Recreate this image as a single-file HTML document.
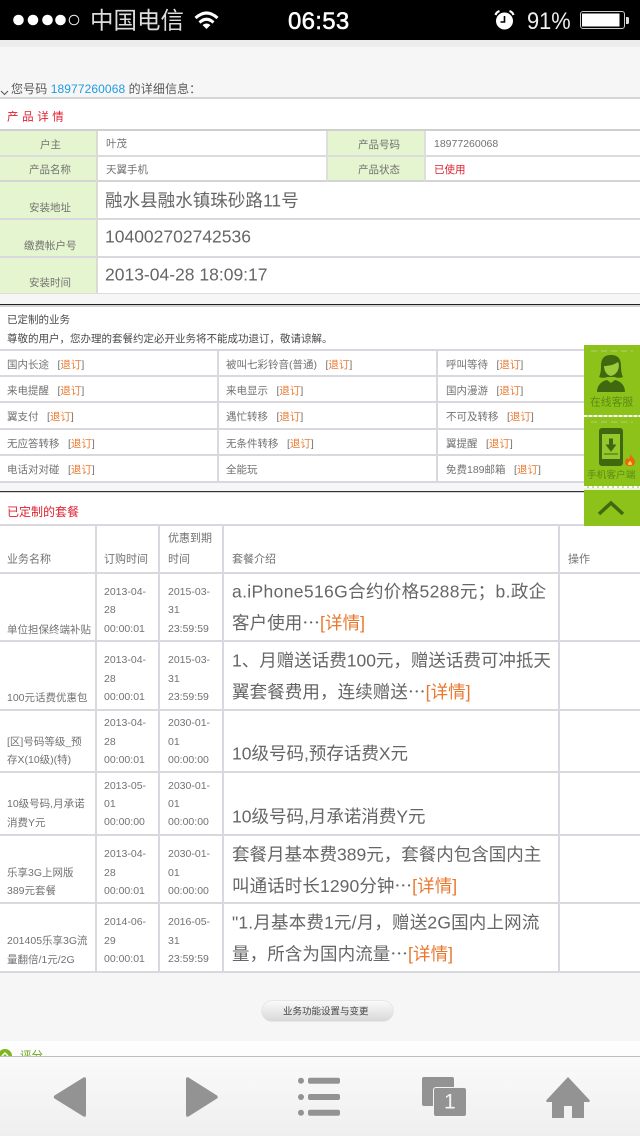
<!DOCTYPE html>
<html lang="zh-Hans"><head><meta charset="utf-8"><title>详细信息</title>
<style>
html,body{margin:0;padding:0;background:#f6f6f6}
#p{position:relative;width:640px;height:1136px;overflow:hidden;background:#f6f6f6;font-family:"Liberation Sans","Noto Sans CJK SC",sans-serif;color:#666}
.r{position:absolute}
.t{position:absolute;white-space:nowrap;line-height:1;transform:translateY(calc(-50% + 2px));font-size:10.5px;color:#727272}
.l{position:absolute;left:0;width:640px;height:2px;background:#d8d8de}
.v{position:absolute;width:2px;background:#d8d8e0}
.g{position:absolute;background:#e5f5cf}
.w{position:absolute;background:#fff}
.o{color:#e9782f}.d{color:#e02030}
.b{font-size:17.5px;color:#666}
.t b{font-weight:normal;margin-left:8.5px}
.e{font-family:"Noto Sans CJK SC",sans-serif}
</style></head><body><div id="p">
<div class="r" style="left:0;top:0;width:640px;height:40px;background:#000"></div>
<div class="r" style="left:0;top:40px;width:640px;height:7px;background:#ececec"></div>
<svg class="r" style="left:0;top:0" width="640" height="40">
<g fill="#fff"><circle cx="18.500" cy="20" r="5.300"/><circle cx="33" cy="20" r="5.300"/><circle cx="47.500" cy="20" r="5.300"/><circle cx="60.500" cy="20" r="5.300"/></g>
<circle cx="74" cy="20" r="4.800" fill="none" stroke="#eee"/>
<g fill="none" stroke="#fff" stroke-width="3"><path d="M195.500 18Q206.500 8 217.500 18"/><path d="M199.500 22.500Q206.500 16 213.500 22.500"/></g><path d="M202.500 25Q206.500 22 210.500 25L206.500 29z" fill="#fff"/>
<circle cx="504.500" cy="21" r="8.500" fill="#fff"/><path d="M504.500 16v6h-4" fill="none" stroke="#000" stroke-width="1.600"/><path d="M495.500 15q1-3 4-4M513.500 15q-1-3-4-4" fill="none" stroke="#fff" stroke-width="2.200"/>
<rect x="580.500" y="11.500" width="44" height="17" rx="2.500" fill="none" stroke="#ccc"/><rect x="582" y="13.500" width="37.500" height="13" fill="#fff"/><path d="M626 17h1.500q1.500 0 1.500 1.500v4q0 1.500-1.500 1.500H626z" fill="#ddd"/>
</svg>
<span class="t" style="left:90px;top:19px;font-size:23.500px;color:#ddd">中国电信</span>
<span class="t" style="left:288px;top:20px;font-size:24px;color:#fff;letter-spacing:.3px;-webkit-text-stroke:.5px #fff">06:53</span>
<span class="t" style="left:527px;top:20px;font-size:24px;color:#eee;transform:translateY(calc(-50% + 2px)) scaleX(.91);transform-origin:left">91%</span>

<svg class="r" style="left:0;top:88px" width="10" height="10"><path d="M1 3l3.500 3.500L8 3" fill="none" stroke="#555"/></svg>
<span class="t" style="left:11px;top:87px;font-size:12px;color:#5a5a5a;letter-spacing:.1px">您号码 <span style="color:#1f9be2">18977260068</span> 的详细信息：</span>
<div class="w" style="left:0;top:97px;width:640px;height:197px"></div>
<div class="l" style="top:97px;background:#d6d6d6"></div>
<span class="t d" style="left:7px;top:116px;font-size:11.500px;letter-spacing:3.600px">产品详情</span>
<div class="l" style="top:129px;background:#cfcfcf"></div>
<div class="g" style="left:0;top:131px;width:96px;height:24px"></div><div class="g" style="left:328px;top:131px;width:96px;height:24px"></div>
<div class="g" style="left:0;top:157px;width:96px;height:24px"></div><div class="g" style="left:328px;top:157px;width:96px;height:24px"></div>
<div class="g" style="left:0;top:182px;width:96px;height:36px"></div><div class="g" style="left:0;top:220px;width:96px;height:36px"></div><div class="g" style="left:0;top:258px;width:96px;height:35px"></div>
<div class="l" style="top:155px;background:#dcdcdc"></div>
<div class="l" style="top:180px;background:#d4d4d4"></div>
<div class="l" style="top:218px"></div><div class="l" style="top:256px"></div><div class="l" style="top:293px;height:1px;background:#dcdcdc"></div>
<div class="v" style="left:96px;top:131px;height:162px;background:#d8ddd0"></div>
<div class="v" style="left:326px;top:131px;height:50px;background:#dedede"></div>
<div class="v" style="left:424px;top:131px;height:50px;background:#dedede"></div>
<span class="t" style="left:40px;top:143px">户主</span><span class="t" style="left:106px;top:142px">叶茂</span>
<span class="t" style="left:358px;top:143px">产品号码</span><span class="t" style="left:434px;top:142px">18977260068</span>
<span class="t" style="left:29px;top:168px">产品名称</span><span class="t" style="left:106px;top:168px">天翼手机</span>
<span class="t" style="left:358px;top:168px">产品状态</span><span class="t d" style="left:434px;top:168px">已使用</span>
<span class="t" style="left:29px;top:206px">安装地址</span><span class="t" style="left:24px;top:244px">缴费帐户号</span><span class="t" style="left:29px;top:281px">安装时间</span>
<span class="t" style="left:105px;top:199px;font-size:17.500px;color:#666;letter-spacing:.05px">融水县融水镇珠砂路11号</span>
<span class="t" style="left:105px;top:235px;font-size:17.500px;color:#666">104002702742536</span>
<span class="t" style="left:105px;top:273px;font-size:17.500px;color:#666">2013-04-28 18:09:17</span>

<div class="w" style="left:0;top:304px;width:640px;height:178px"></div>
<div class="l" style="top:304px;height:1px;background:#222"></div><div class="l" style="top:305px;background:#d4d4d4"></div>
<span class="t" style="left:7px;top:318px;color:#4a4a4a">已定制的业务</span>
<span class="t" style="left:7px;top:337px;color:#4a4a4a">尊敬的用户，您办理的套餐约定必开业务将不能成功退订，敬请谅解。</span>
<div class="l" style="top:349px"></div><div class="l" style="top:375px"></div><div class="l" style="top:401px"></div><div class="l" style="top:428px"></div><div class="l" style="top:454px"></div><div class="l" style="top:481px"></div>
<div class="v" style="left:217px;top:350px;height:132px"></div><div class="v" style="left:436px;top:350px;height:132px"></div>
<span class="t" style="left:7px;top:363px">国内长途<b>[</b><span class="o">退订</span>]</span><span class="t" style="left:226px;top:363px">被叫七彩铃音(普通)<b>[</b><span class="o">退订</span>]</span><span class="t" style="left:446px;top:363px">呼叫等待<b>[</b><span class="o">退订</span>]</span>
<span class="t" style="left:7px;top:389px">来电提醒<b>[</b><span class="o">退订</span>]</span><span class="t" style="left:226px;top:389px">来电显示<b>[</b><span class="o">退订</span>]</span><span class="t" style="left:446px;top:389px">国内漫游<b>[</b><span class="o">退订</span>]</span>
<span class="t" style="left:7px;top:415px">翼支付<b>[</b><span class="o">退订</span>]</span><span class="t" style="left:226px;top:415px">遇忙转移<b>[</b><span class="o">退订</span>]</span><span class="t" style="left:446px;top:415px">不可及转移<b>[</b><span class="o">退订</span>]</span>
<span class="t" style="left:7px;top:442px">无应答转移<b>[</b><span class="o">退订</span>]</span><span class="t" style="left:226px;top:442px">无条件转移<b>[</b><span class="o">退订</span>]</span><span class="t" style="left:446px;top:442px">翼提醒<b>[</b><span class="o">退订</span>]</span>
<span class="t" style="left:7px;top:468px">电话对对碰<b>[</b><span class="o">退订</span>]</span><span class="t" style="left:226px;top:468px">全能玩</span><span class="t" style="left:446px;top:468px">免费189邮箱<b>[</b><span class="o">退订</span>]</span>

<div class="w" style="left:0;top:491px;width:640px;height:481px"></div>
<div class="l" style="top:491px;height:1px;background:#333"></div><div class="l" style="top:492px;height:1px;background:#d4d4d4"></div>
<span class="t d" style="left:7px;top:510px;font-size:12px">已定制的套餐</span>
<div class="l" style="top:524px"></div><div class="l" style="top:572px"></div><div class="l" style="top:640px"></div><div class="l" style="top:709px"></div><div class="l" style="top:771px"></div><div class="l" style="top:834px"></div><div class="l" style="top:902px"></div><div class="l" style="top:971px"></div>
<div class="v" style="left:95px;top:525px;height:447px"></div><div class="v" style="left:158px;top:525px;height:447px"></div><div class="v" style="left:222px;top:525px;height:447px"></div><div class="v" style="left:558px;top:525px;height:447px"></div>
<span class="t" style="left:7px;top:558px;font-size:11px">业务名称</span><span class="t" style="left:104px;top:558px;font-size:11px">订购时间</span><span class="t" style="left:168px;top:537px;font-size:11px">优惠到期</span><span class="t" style="left:168px;top:558px;font-size:11px">时间</span><span class="t" style="left:232px;top:558px;font-size:11px">套餐介绍</span><span class="t" style="left:568px;top:558px;font-size:11px">操作</span>

<span class="t" style="left:7px;top:628px">单位担保终端补贴</span>
<span class="t" style="left:104px;top:590px">2013-04-</span><span class="t" style="left:104px;top:608px">28</span><span class="t" style="left:104px;top:627px">00:00:01</span>
<span class="t" style="left:168px;top:590px">2015-03-</span><span class="t" style="left:168px;top:608px">31</span><span class="t" style="left:168px;top:627px">23:59:59</span>
<span class="t b" style="left:232px;top:590px;letter-spacing:.35px">a.iPhone516G合约价格5288元；b.政企</span><span class="t b" style="left:232px;top:621px;letter-spacing:.1px">客户使用<span class="e">…</span><span class="o">[详情]</span></span>

<span class="t" style="left:7px;top:696px">100元话费优惠包</span>
<span class="t" style="left:104px;top:658px">2013-04-</span><span class="t" style="left:104px;top:677px">28</span><span class="t" style="left:104px;top:695px">00:00:01</span>
<span class="t" style="left:168px;top:658px">2015-03-</span><span class="t" style="left:168px;top:677px">31</span><span class="t" style="left:168px;top:695px">23:59:59</span>
<span class="t b" style="left:232px;top:659px">1、月赠送话费100元，赠送话费可冲抵天</span><span class="t b" style="left:232px;top:690px;letter-spacing:.1px">翼套餐费用，连续赠送<span class="e">…</span><span class="o">[详情]</span></span>

<span class="t" style="left:7px;top:740px">[区]号码等级_预</span><span class="t" style="left:7px;top:758px">存X(10级)(特)</span>
<span class="t" style="left:104px;top:721px">2013-04-</span><span class="t" style="left:104px;top:740px">28</span><span class="t" style="left:104px;top:758px">00:00:01</span>
<span class="t" style="left:168px;top:721px">2030-01-</span><span class="t" style="left:168px;top:740px">01</span><span class="t" style="left:168px;top:758px">00:00:00</span>
<span class="t b" style="left:232px;top:752px">10级号码,预存话费X元</span>

<span class="t" style="left:7px;top:802px">10级号码,月承诺</span><span class="t" style="left:7px;top:821px">消费Y元</span>
<span class="t" style="left:104px;top:784px">2013-05-</span><span class="t" style="left:104px;top:802px">01</span><span class="t" style="left:104px;top:820px">00:00:00</span>
<span class="t" style="left:168px;top:784px">2030-01-</span><span class="t" style="left:168px;top:802px">01</span><span class="t" style="left:168px;top:820px">00:00:00</span>
<span class="t b" style="left:232px;top:815px">10级号码,月承诺消费Y元</span>

<span class="t" style="left:7px;top:871px">乐享3G上网版</span><span class="t" style="left:7px;top:889px">389元套餐</span>
<span class="t" style="left:104px;top:852px">2013-04-</span><span class="t" style="left:104px;top:871px">28</span><span class="t" style="left:104px;top:889px">00:00:01</span>
<span class="t" style="left:168px;top:852px">2030-01-</span><span class="t" style="left:168px;top:871px">01</span><span class="t" style="left:168px;top:889px">00:00:00</span>
<span class="t b" style="left:232px;top:853px">套餐月基本费389元，套餐内包含国内主</span><span class="t b" style="left:232px;top:884px;letter-spacing:.1px">叫通话时长1290分钟<span class="e">…</span><span class="o">[详情]</span></span>

<span class="t" style="left:7px;top:939px">201405乐享3G流</span><span class="t" style="left:7px;top:958px">量翻倍/1元/2G</span>
<span class="t" style="left:104px;top:920px">2014-06-</span><span class="t" style="left:104px;top:939px">29</span><span class="t" style="left:104px;top:957px">00:00:01</span>
<span class="t" style="left:168px;top:920px">2016-05-</span><span class="t" style="left:168px;top:939px">31</span><span class="t" style="left:168px;top:957px">23:59:59</span>
<span class="t b" style="left:232px;top:921px;letter-spacing:.18px">"1.月基本费1元/月，赠送2G国内上网流</span><span class="t b" style="left:232px;top:952px;letter-spacing:.1px">量，所含为国内流量<span class="e">…</span><span class="o">[详情]</span></span>

<div class="r" style="left:262px;top:1001px;width:131px;height:20px;border-radius:10px;background:linear-gradient(#fafafa,#d8d8d8);box-shadow:0 0 1px #999"></div>
<span class="t" style="left:283px;top:1010px;font-size:9.500px;color:#444">业务功能设置与变更</span>
<div class="r" style="left:0;top:1041px;width:640px;height:16px;background:#fdfdfd"></div>
<svg class="r" style="left:0;top:1048px" width="16" height="9"><circle cx="5" cy="8" r="7" fill="#7db51e"/><path d="M2 8l3-3 3 3" stroke="#fff" stroke-width="1.500" fill="none"/></svg>
<span class="t" style="left:20px;top:1055px;font-size:11.500px;color:#6fa51c">评分</span>

<div class="r" style="left:0;top:1056px;width:640px;height:80px;background:linear-gradient(#fafafa,#efefef);border-top:1px solid #bdbdbd;box-sizing:border-box"></div>
<svg class="r" style="left:0;top:1057px" width="640" height="79" fill="#939393">
<path d="M54.500 38.500L83.500 20.500q2.500-1 2.500 1.500v36q0 2.500-2.500 1.500L54.500 41.500q-1.500-1.500 0-3z"/>
<path d="M217 38.500L188.500 20.500q-2.500-1-2.500 1.500v36q0 2.500 2.500 1.500L217 41.500q1.500-1.500 0-3z"/>
<circle cx="301" cy="23.700" r="3"/><circle cx="301" cy="40" r="3"/><circle cx="301" cy="55.700" r="3"/>
<rect x="308" y="20.700" width="32" height="6" rx="2"/><rect x="308" y="37" width="32" height="6" rx="2"/><rect x="308" y="52.700" width="32" height="6" rx="2"/>
<rect x="422" y="20" width="32" height="29" rx="2"/><rect x="433.500" y="30.500" width="33" height="29" rx="2.500" stroke="#f4f4f4"/>
<path d="M568 20L546.500 43q-1 2 1 2H552v16h12V49h8v12h12V45h4.500q2 0 1-2z"/>
</svg>
<span class="t" style="left:444px;top:1100px;font-size:21px;color:#f4f4f4">1</span>

<div class="r" style="left:584px;top:345px;width:56px;height:181px;background:#8cc21a"></div>
<div class="r" style="left:584px;top:415px;width:56px;height:2px;background:repeating-linear-gradient(90deg,#fff 0 3px,#c5e08a 3px 5px)"></div>
<div class="r" style="left:584px;top:486px;width:56px;height:2px;background:repeating-linear-gradient(90deg,#fff 0 3px,#c5e08a 3px 5px)"></div>
<div class="r" style="left:584px;top:488px;width:56px;height:2px;background:#eef4dc"></div>
<svg class="r" style="left:584px;top:346px" width="56" height="180">
<path d="M7 5h42" stroke="#a9cc6e" stroke-width="1.200" stroke-dasharray="6 4"/><path d="M7 76h42" stroke="#a9cc6e" stroke-width="1.200" stroke-dasharray="6 4"/>
<path d="M27 9c-8 0-10 5-10 11 0 6-1 9-2 11 3 1 6 1 8 0h8c2 1 5 1 8 0-1-2-2-5-2-11 0-6-2-11-10-11z" fill="#40690f"/>
<path d="M20 20c4 0 10-1 14-4 2 3 1 12-7 14-5-1-7-6-7-10z" fill="#9ecb3c"/>
<path d="M13 46c0-7 5-11 10-12l4 3 4-3c5 1 10 5 10 12z" fill="#40690f"/>
<rect x="15" y="82" width="24" height="38" rx="3" fill="#40690f"/><rect x="18" y="88" width="18" height="25" fill="#96c82e"/>
<path d="M25.500 93h3v6h3l-4.500 6-4.500-6h3zM20 108h14" fill="#40690f" stroke="#40690f" stroke-width="1"/>
<path d="M46 108c2 3 5 5 5 8s-2 4-5 4-5-1-5-4c0-2 1-3 2-4 1 1 1 1 2 1 1-2 1-3 1-5z" fill="#e66a10"/><path d="M46 115c1 1 2 2 2 3s-1 1-2 1-2 0-2-1 1-2 2-3z" fill="#ffd23c"/>
<path d="M15 168l12-11 12 11" fill="none" stroke="#40690f" stroke-width="3.500"/>
</svg>
<span class="t" style="left:590px;top:401px;font-size:10.800px;color:#5a8c14">在线客服</span>
<span class="t" style="left:587px;top:474px;font-size:9.700px;color:#5a8c14">手机客户端</span>
</div></body></html>
